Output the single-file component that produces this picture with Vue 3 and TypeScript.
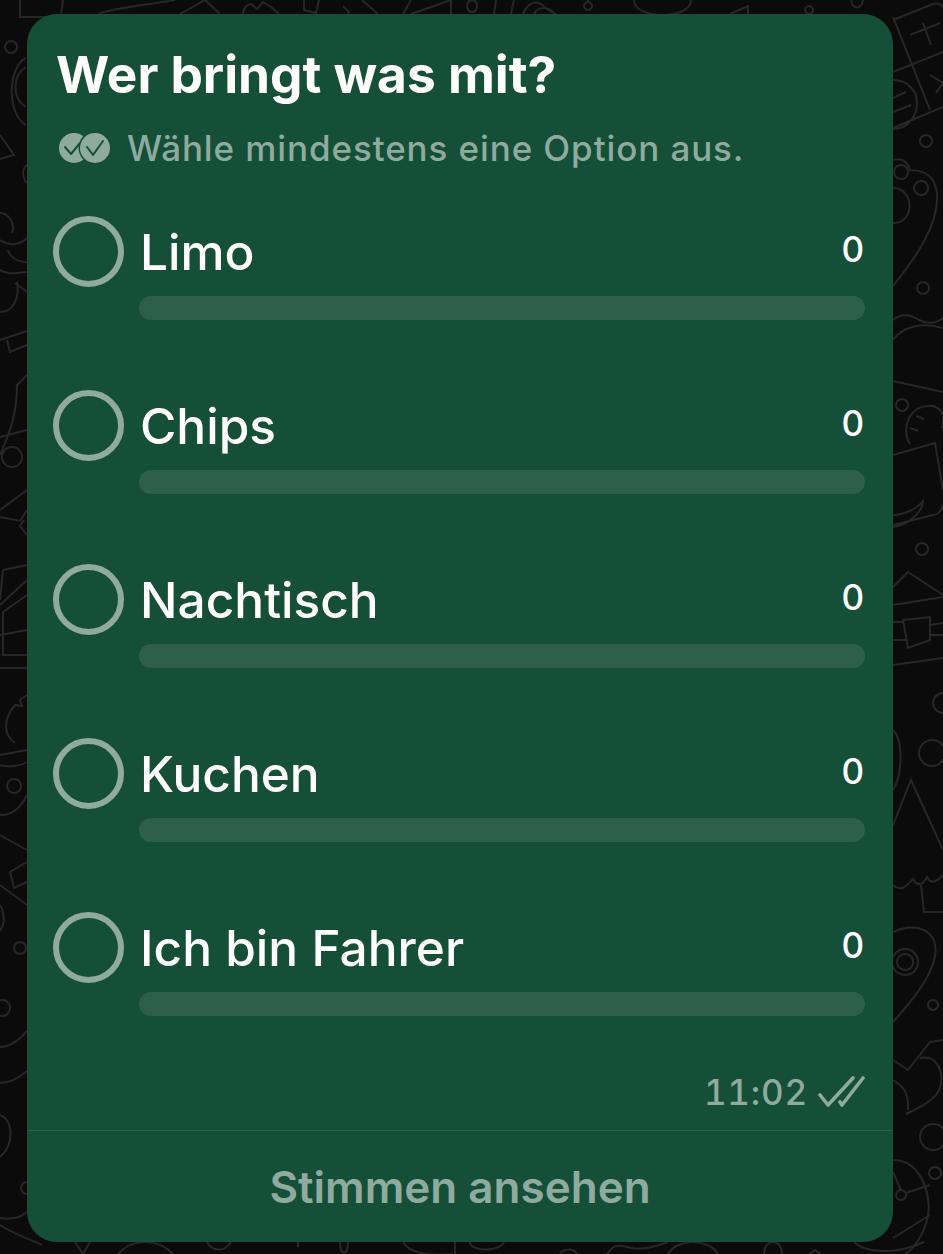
<script setup lang="ts">
const options = ['Limo', 'Chips', 'Nachtisch', 'Kuchen', 'Ich bin Fahrer']
</script>

<template>
  <div class="screen">
    <svg class="doodles" width="943" height="1254" viewBox="0 0 943 1254" fill="none">
      <!-- top -->
      <path d="M20 0v17h40M63 0l-2 13M99 14c4-4 40-8 76-14M180 14l25-14 15 14M243 14c0-6 4-10 8-10l6 5 6-7 8 5 8 7M304 0v10l12 3 3-13M343 6l6 6-4 8M362 0l16 14M403 14l8-14M411 14l40-14M451 0v14" />
      <path d="M472 0a5 6 0 1 0 .1 0zM496 0l-2 14M514 0l-3 14M523 14c6-14 16-14 22-6l14 8M534 14c4-8 16-8 20 0M588 0v2a4 4 0 1 0 .1 0M634 0c0 20 57 20 57 0M730 14l18-8v8M809 6a4 4 0 1 0 .1 0zM851 0c2 10 10 10 12 0" />
      <!-- left -->
      <path d="M11 41a6 6 0 1 0 .1 0zM26 58c-18 8-20 56 0 67M26 67c-14 8-14 32 0 40M0 135l14 20-14 4M27 165c-6 4-4 14 0 18M0 213c8 0 16 10 12 20M0 240c10 6 18 6 27-2M8 250c2 8 10 12 19 12M0 270c10 6 18 2 27 2" />
      <path d="M0 312c12 0 20-12 17-30M27 292l-12-9M0 340l27-9M7 340l3 12 17-7M27 375l-10 10c0 30-8 50-17 70M0 437l27-7M12 447a10 10 0 1 0 .1 0zM0 510l27-20M0 517l20 4 7-11M24 520l-4 6 7 9M3 570l24-5M3 570l-3 30M27 580l-27 25M0 635l27-5M27 595l-24 17v43h24M0 668h27M27 695l-7 5 2 6-7-1c-12 14-12 30 0 38M0 755l27-5" />
      <path d="M0 765c8 2 18 2 27-3M14 779a7 7 0 1 0 .1 0zM0 815c12 0 20-6 27-20M0 835l27 15M27 862l-17 10 4 16 13-6M0 885l27 20M0 905c6 10 4 20 0 26M20 942a6 6 0 1 0 .1 0zM2 1000a8 8 0 1 0 .1 0zM0 1047c10 0 20-8 27-16M0 1083c10 0 20-6 27-12M0 1115c14 6 14 30 0 42M27 1182a6 6 0 1 0 0 12M0 1218c12 2 20 0 27-6M0 1225c20 12 30 14 42 20" />
      <!-- right -->
      <path d="M893 20l40-16c6-2 10 2 10 4M893 17l37 93M893 72l50-20M893 128l50-21M910 35l30-12M923 23l8 22M930 75l13 8-7 10M893 80c14 0 24 10 24 23 0 14-10 26-24 26M893 98l13-6M893 112l18-7" />
      <path d="M926 135a6 6 0 1 0 .1 0zM901 165a7 7 0 1 0 .1 0zM921 181a7 7 0 1 0 .1 0zM893 160c8-2 14 0 17 10 12 0 25 4 27 24 2 30-20 62-44 92M893 188c22 0 22 36 0 35M923 282a6 6 0 1 0 .1 0zM893 320c10-8 20-4 26 0 8 4 16 4 24-2M893 340c10-14 30-18 50-12" />
      <path d="M893 381l50 11M902 399a6 6 0 1 0 .1 0zM893 455l42-12 8 47M910 444c-10-16 0-40 22-38 10 2 14 10 10 22M916 416l8 3M910 428l8 3M893 515c10 0 24-6 30-14 0 10-14 24-30 26M893 525l40-10c4 0 8-4 10-10M922 543a6 6 0 1 0 .1 0zM893 587l15-15 35 23M893 605l50-8M903 620l27-3v23l-22 8zM893 622h10M930 625l13-2M893 640h14M930 635h13M893 665l50-7" />
      <path d="M943 693a10 10 0 0 0 0 20M893 730c10 10 10 44 0 60M932 740a13 13 0 1 0 .1 0zM893 825l18-45 32 70M893 885c8 8 14 0 20-6 4 8 10 6 14-2 4 8 10 4 16-2M921 885l3 27h19" />
      <path d="M893 932c20-10 46-4 42 24-4 24-28 50-42 66M905 949a13 13 0 1 0 .1 0zM905 954a8 8 0 1 0 .1 0zM933 1000a5 5 0 1 0 .1 0zM943 1040l-13 2-22 28-15-10M920 1058c20-4 26 20 18 34-6 10-20 16-32 22M893 1080c10 6 16 12 15 30M933 1124a13 13 0 1 0 .1 0zM935 1167a6 6 0 1 0 .1 0zM893 1160c30 0 40 40 34 60-4 16-14 30-22 34M901 1190a5 5 0 1 0 .1 0zM906 1193l24-8M901 1190l-8-18M893 1238l37-23" />
      <!-- bottom -->
      <path d="M75 1242l8 12 7-12M118 1254c14-16 40-16 55 0M207 1242c4 8 16 12 24 0M298 1242v5M340 1242c0 14 8 14 8 0M403 1242c6 12 30 14 50 12M455 1242v12M470 1242c0 10 30 10 34 0M560 1254c4-6 14-6 17 0M607 1254c8-12 14-8 25-6 10 2 20 0 36-6M668 1254c10-16 40-16 50 0M764 1254c0-16 18-16 18 0M809 1254l6-4 6 4M854 1242c10 10 40 14 70 0" />
    </svg>

    <div class="card">
      <div class="content">
        <h1 class="title">Wer bringt was mit?</h1>
        <div class="hint">
          <svg class="hint-icon" width="53" height="32" viewBox="0 0 53 32">
            <circle cx="16" cy="16" r="15" fill="#8fab9f" />
            <path d="M7 15l6 7 9-11" fill="none" stroke="#154f38" stroke-width="2" stroke-linecap="round" stroke-linejoin="round" />
            <circle cx="37" cy="16" r="16.5" fill="#154f38" />
            <circle cx="37" cy="16" r="15" fill="#8fab9f" />
            <path d="M29 15l6 8 10-14" fill="none" stroke="#154f38" stroke-width="2" stroke-linecap="round" stroke-linejoin="round" />
          </svg>
          <span>Wähle mindestens eine Option aus.</span>
        </div>

        <div class="options">
          <div v-for="opt in options" :key="opt" class="option">
            <span class="radio"></span>
            <div class="option-body">
              <div class="option-top">
                <span class="option-name">{{ opt }}</span>
                <span class="option-count">0</span>
              </div>
              <div class="bar"></div>
            </div>
          </div>
        </div>

        <div class="meta">
          <span>11:02</span>
          <svg width="47" height="32" viewBox="0 0 47 32" fill="none" stroke="#8fab9f" stroke-width="3.6" stroke-linecap="round" stroke-linejoin="round">
            <path d="M2 19l8 10L35 2" />
            <path d="M22 26l2 3L45 2" />
          </svg>
        </div>
      </div>
      <div class="footer">Stimmen ansehen</div>
    </div>
  </div>
</template>

<style scoped>
.screen {
  position: relative;
  width: 943px;
  height: 1254px;
  padding: 14px 50px 12px 27px;
  box-sizing: border-box;
  background: #0b0b0b;
  overflow: hidden;
  font-family: Inter, "Liberation Sans", sans-serif;
}

.doodles {
  position: absolute;
  top: 0;
  left: 0;
  stroke: #272727;
  stroke-width: 2;
}

.card {
  position: relative;
  height: 100%;
  display: flex;
  flex-direction: column;
  background: #154f38;
  border-radius: 30px;
}

.content {
  flex: 1;
  padding: 0 28px 0 26px;
}

.title {
  margin: 30px 0 0 3px;
  font-size: 51.4px;
  line-height: 60px;
  font-weight: 700;
  color: #fff;
}

.hint {
  display: flex;
  align-items: center;
  gap: 16px;
  margin: 24px 0 0 5px;
  height: 40px;
  font-size: 35px;
  letter-spacing: 0.9px;
  font-weight: 500;
  color: #8fab9f;
}

.options {
  margin-top: 47px;
  display: flex;
  flex-direction: column;
}

.option {
  display: flex;
  height: 174px;
  box-sizing: border-box;
}

.radio {
  flex: none;
  width: 71px;
  height: 71px;
  margin-top: 1px;
  box-sizing: border-box;
  border: 6px solid #8fab9f;
  border-radius: 50%;
}

.option-body {
  flex: 1;
  margin-left: 15px;
}

.option-top {
  display: flex;
  justify-content: space-between;
  height: 81px;
  color: #fff;
}

.option-name {
  font-size: 49.6px;
  line-height: 74px;
  font-weight: 500;
  margin-left: 1px;
}

.option-count {
  font-size: 35px;
  line-height: 68px;
  font-weight: 500;
  margin-right: 1px;
}

.bar {
  height: 24px;
  border-radius: 12px;
  background: #2d5f4b;
}

.meta {
  display: flex;
  align-items: center;
  justify-content: flex-end;
  gap: 10px;
  margin-top: -14px;
  font-size: 35px;
  font-weight: 500;
  letter-spacing: 0.8px;
  font-feature-settings: "tnum";
  color: #8fab9f;
}

.footer {
  height: 111px;
  border-top: 1px solid #2a5f4a;
  display: flex;
  align-items: center;
  justify-content: center;
  font-size: 44px;
  font-weight: 600;
  color: #8fab9f;
}
</style>

<style>
body {
  background: #0b0b0b;
}
</style>
